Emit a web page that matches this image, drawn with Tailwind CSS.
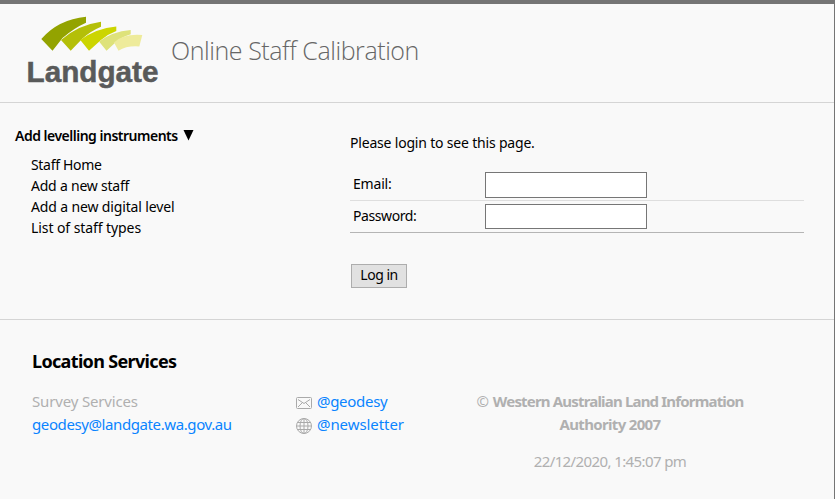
<!DOCTYPE html>
<html lang="en">
<head>
<meta charset="utf-8">
<title>Online Staff Calibration</title>
<script src="https://cdn.jsdelivr.net/npm/@tailwindcss/browser@4"></script>
</head>
<body class="w-[835px] h-[499px] overflow-hidden bg-[#f9f9f9] border-t-4 border-r border-[#757575] font-['Noto_Sans',sans-serif] text-[14px] text-black whitespace-nowrap">
<header class="h-[99px] border-b border-[#d5d5d5] flex">
  <svg class="ml-[26px] mt-[6px] w-[136px] h-[84px] shrink-0" viewBox="26 10 136 84" role="img" aria-label="Landgate">
    <path fill="#93a300" d="M41.300 39Q58 19.500 86 16.700V22.700Q74 28 62.500 38L52.500 50.700Z"/>
    <path fill="#b4bf08" d="M61 40Q78 25 101 21.800V26.800Q91 31 82.500 38.500L70.700 50.700Z"/>
    <path fill="#ccd500" d="M80.300 40Q96 28.500 116.300 26.600V31Q108 34 101 40L89 50.700Z"/>
    <path fill="#dee27a" d="M99 41.500Q112 31.500 130.700 29.900V34.300Q122 37 116 42L106.500 50.700Z"/>
    <path fill="#eeeb9b" d="M114 42.500Q123 33.500 142.300 35L139.300 46.500Q127 45.500 118.500 50.700Z"/>
    <text x="26.500" y="82" font-family="'Liberation Sans',sans-serif" font-weight="700" font-size="30" textLength="132" lengthAdjust="spacingAndGlyphs" fill="#595a5a" stroke="#595a5a" stroke-width=".5">Landgate</text>
  </svg>
  <h1 class="ml-[9px] mt-[28px] text-[25px] leading-[36px] font-light tracking-[-0.43px] text-[#666] font-['Open_Sans',sans-serif]">Online Staff Calibration</h1>
</header>
<main class="h-[217px] border-b border-[#d5d5d5] flex">
  <nav class="w-[350px] pl-[15px] pt-[22px]">
    <div class="flex items-center h-[21px] font-semibold"><span class="tracking-[-0.5px]">Add levelling instruments</span><svg class="ml-[5px] w-[11px] h-[11px]" viewBox="0 0 11 11"><path d="M.5 0H10.500L5.500 10.500Z"/></svg></div>
    <ul class="mt-[8px] ml-[16px] leading-[21px]">
      <li class="tracking-[-0.32px]">Staff Home</li>
      <li class="tracking-[-0.22px]">Add a new staff</li>
      <li class="tracking-[-0.14px]">Add a new digital level</li>
      <li class="tracking-[-0.08px]">List of staff types</li>
    </ul>
  </nav>
  <form class="w-[454px] pt-[29px]">
    <p class="leading-[21px] tracking-[-0.19px]">Please login to see this page.</p>
    <div class="mt-[16px] h-[32px] border-b border-[#dedede] pl-[3px] flex items-start">
      <label class="w-[132px] mt-[4px] leading-[21px] tracking-[-0.2px]">Email:</label><input type="text" class="mt-[3px] w-[162px] h-[26px] bg-white border border-[#767676]">
    </div>
    <div class="h-[32px] border-b border-[#b5b5b5] pl-[3px] flex items-start">
      <label class="w-[132px] mt-[4px] leading-[21px] tracking-[-0.42px]">Password:</label><input type="password" class="mt-[3px] w-[162px] h-[25px] bg-white border border-[#767676]">
    </div>
    <button type="button" class="mt-[31px] ml-px w-[56px] h-[24px] border border-[#adadad] bg-[#e1e1e1] leading-[20px] pb-[3px] tracking-[-0.5px]">Log in</button>
  </form>
</main>
<footer class="pl-[32px] pt-[29px] text-[15px] leading-[23px] text-[#b0b0b0]">
  <h2 class="text-[18px] leading-[24px] font-bold text-black tracking-[-0.66px]">Location Services</h2>
  <div class="mt-[17px] flex">
    <div class="w-[264px]">
      <div class="tracking-[-0.16px]">Survey Services</div>
      <a class="text-[#0a84ff] tracking-[-0.4px]">geodesy@landgate.wa.gov.au</a>
    </div>
    <div class="w-[164px] text-[#0a84ff]">
      <div class="flex items-center"><svg class="w-4 h-3 mr-[5px] mt-[2px]" viewBox="0 0 16 12" fill="none" stroke="#aaa"><rect x=".5" y=".5" width="15" height="11" rx="1"/><path d="M2 2.500L8 6.500L14 2.500M2 10L6 6M14 10L10 6"/></svg><span class="tracking-[-0.3px]">@geodesy</span></div>
      <div class="flex items-center"><svg class="w-4 h-4 mr-[5px] mt-[2px]" viewBox="0 0 16 16" fill="none" stroke="#aaa"><circle cx="8" cy="8" r="7.500"/><ellipse cx="8" cy="8" rx="4" ry="7.500"/><path d="M8 .5V15.500M.5 8H15.500M2 4.500H14M2 11.500H14"/></svg><span class="tracking-[-0.07px]">@newsletter</span></div>
    </div>
    <div class="w-[300px] text-center">
      <div><span>©</span> <b class="tracking-[-0.82px]">Western Australian Land Information</b></div>
      <div class="font-bold tracking-[-0.67px]">Authority 2007</div>
      <div class="mt-[14px] tracking-[-0.6px]">22/12/2020, 1:45:07 pm</div>
    </div>
  </div>
</footer>
</body>
</html>
